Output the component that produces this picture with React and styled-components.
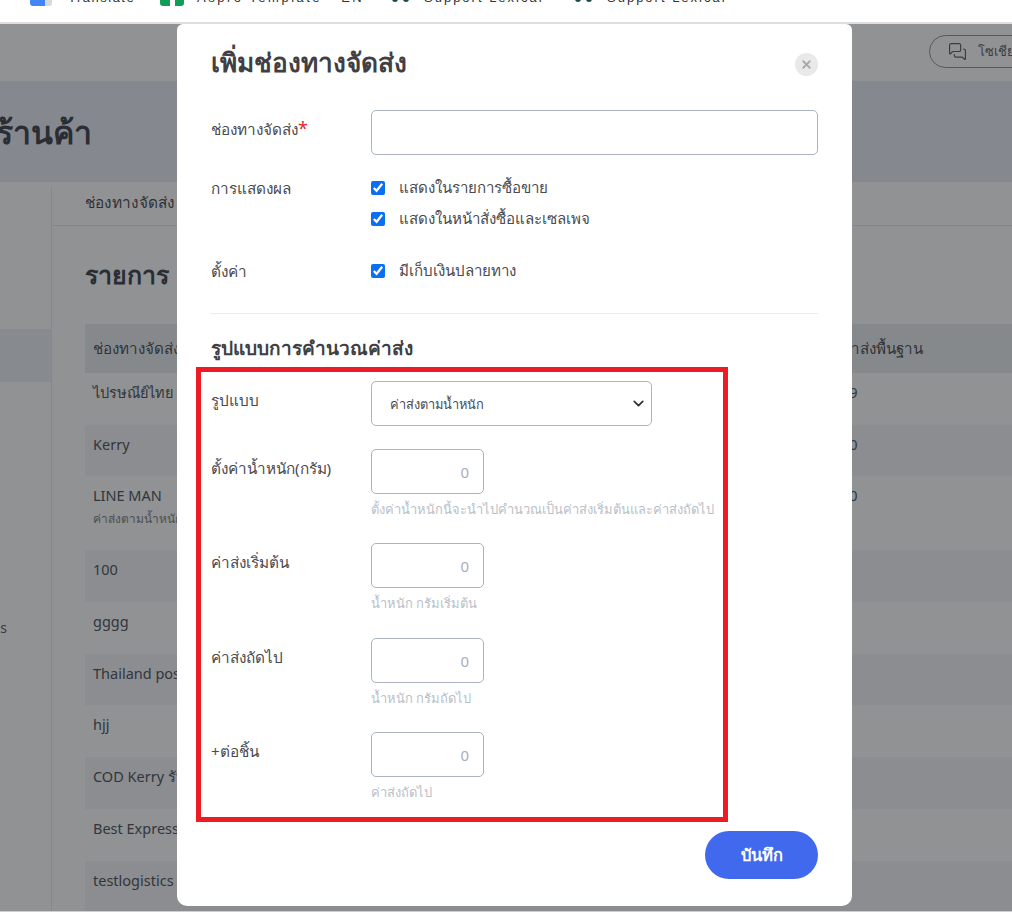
import React from "react";
import styled, { createGlobalStyle } from "styled-components";
import { MessagesSquare, ChevronDown, X } from "lucide-react";

const Global = createGlobalStyle`
  html, body { margin: 0; padding: 0; background: #fff; }
  body { font-family: "Noto Sans", "Open Sans", sans-serif; color: #444; }
  * { box-sizing: border-box; }
`;

const Screen = styled.div`
  width: 1012px; height: 916px; overflow: hidden; display: flex; flex-direction: column; background: #fff;
`;
const BookmarkBar = styled.div`
  height: 24px; flex: none; overflow: hidden; background: #fff; border-bottom: 2px solid #dedede;
  display: flex; align-items: flex-start; padding-left: 30px;
`;
const Bookmark = styled.div`
  display: flex; align-items: center; gap: ${p => p.$gap}px; margin-top: -10px;
  height: 15px; font: 13px/15px "Liberation Sans", sans-serif; letter-spacing: ${p => p.$spacing}px; color: #333; white-space: nowrap;
  width: ${p => p.$width}px;
`;
const TranslateIcon = styled.span`
  width: 22px; height: 17px; flex: none; background: linear-gradient(90deg, #4285f4 70%, #d6d9de 70%);
  border-radius: 0 0 3px 3px;
`;
const SheetIcon = styled.span`
  width: 24px; height: 17px; flex: none; background: #0f9d58; border-radius: 0 0 3px 3px; display: flex; justify-content: center;
  &::after { content: ""; width: 5px; height: 100%; background: #fff; }
`;
const Dots = styled.span`
  width: 17px; flex: none; height: 15px; display: flex; justify-content: space-between; align-items: flex-end; padding-bottom: 3px;
  &::before, &::after { content: ""; width: 6px; height: 6px; border-radius: 50%; background: #1b4a4a; }
`;

const Page = styled.div`
  position: relative; height: 888px; flex: none; overflow: hidden; background: #fff; border-bottom: 1px solid #cfcfcf;
`;
const Backdrop = styled.div`
  position: absolute; inset: 0; background: rgba(33, 37, 41, 0.5);
`;
const TopNav = styled.div`
  height: 57px; display: flex; justify-content: flex-end; padding: 11px 0 0;
`;
const SocialButton = styled.div`
  width: 100px; margin-right: -17px; height: 33px; border: 1px solid #8a8a8a; border-radius: 17px; display: flex; align-items: center; gap: 11px;
  padding-left: 18px; font-size: 13px; color: #555; white-space: nowrap; overflow: hidden; flex: none;
`;
const TitleBand = styled.div`
  height: 101px; background: #e9ebf5; display: flex; align-items: center;
`;
const TitleClip = styled.div`
  width: 92px; overflow: hidden; display: flex; justify-content: flex-end; flex: none;
`;
const PageTitle = styled.h1`
  margin: 0; font-size: 32px; line-height: 44px; font-weight: 600; color: #33353d; white-space: nowrap; flex: none;
`;
const Body = styled.div`
  display: flex; height: 730px;
`;
const Sidebar = styled.div`
  width: 52px; flex: none; border-right: 1px solid #e8e8ea; margin-top: 5px; padding-top: 142px;
`;
const SideActive = styled.div`
  height: 53px; background: #edeff5;
`;
const SideLabelClip = styled.div`
  width: 7px; margin-top: 234px; overflow: hidden; display: flex; justify-content: flex-end; font-size: 14px; line-height: 24px; color: #555;
`;
const SideLabel = styled.span` white-space: nowrap; flex: none; `;
const Main = styled.div` flex: 1; min-width: 0; `;
const TabBar = styled.div`
  height: 44px; padding: 9px 0 0 33px; border-bottom: 1px solid #e6e6e8; font-size: 15.4px; line-height: 24px; color: #3d3d44;
`;
const ListTitle = styled.h2`
  margin: 30px 0 14px 33px; font-size: 25px; line-height: 36px; height: 54px; font-weight: 700; color: #33353d;
`;
const Table = styled.div` margin-left: 33px; `;
const TableHead = styled.div`
  display: grid; grid-template-columns: 748px 1fr; height: 49px; align-items: center; background: #ebedef; font-size: 15.2px; color: #3d3f47;
`;
const TableRow = styled.div`
  display: grid; grid-template-columns: 748px 1fr; height: ${p => (p.$tall ? 74 : 51.7)}px;
  background: ${p => (p.$alt ? "#f5f5f7" : "#fff")}; padding-top: 7px; font-size: 14.5px; line-height: 24px; color: #44464d;
`;
const Cell = styled.div` padding-left: 8px; white-space: nowrap; `;
const SubText = styled.div` font-size: 12px; line-height: 24px; color: #777; `;

const Modal = styled.div`
  position: absolute; left: 177px; top: 0; width: 675px; height: 882px; background: #fff; border-radius: 6px 6px 10px 10px;
  padding: 22px 34px 0; display: flex; flex-direction: column;
`;
const ModalHeader = styled.div`
  height: 36px; margin-bottom: 28px; display: flex; align-items: center; justify-content: space-between; flex: none;
`;
const ModalTitle = styled.h3`
  margin: 0; padding-bottom: 4px; font-size: 26.2px; line-height: 36px; font-weight: 600; color: #3f3f44;
`;
const CloseButton = styled.button`
  width: 23px; height: 23px; padding: 0; border: none; border-radius: 50%; background: #e9e9e9; color: #ababab; display: flex; align-items: center; justify-content: center; margin-right: 0;
`;
const FormRow = styled.div`
  display: grid; grid-template-columns: 160px 1fr; margin-top: ${p => p.$top || 0}px;
`;
const Label = styled.div`
  font-size: 15.3px; line-height: 22px; color: #4a4a4f; padding-top: ${p => p.$pad || 0}px;
`;
const Required = styled.span` color: #e8262d; font-size: 18px; line-height: 18px; `;
const TextField = styled.input`
  display: block; width: ${p => p.$width || "100%"}; height: 45px; border: 1px solid #a9b3c1; border-radius: 5px; background: #fff; outline: none;
  font: 15px "Noto Sans", sans-serif; padding: 0 14px; text-align: ${p => (p.$number ? "right" : "left")};
  &::placeholder { color: #a8aeb8; opacity: 1; }
`;
const CheckList = styled.div` display: flex; flex-direction: column; gap: 10px; `;
const CheckLabel = styled.label`
  display: flex; align-items: center; gap: 14px; height: 21px; font-size: 15.1px; color: #4a4a4f;
`;
const Check = styled.input`
  width: 14px; height: 14px; margin: 0; accent-color: #0b6ff2; flex: none;
`;
const Divider = styled.hr`
  margin: 31px 0 0; border: none; border-top: 1px solid #ececec;
`;
const SectionTitle = styled.h4`
  margin: 21px 0 6px; font-size: 19px; line-height: 26px; font-weight: 700; color: #3f3f44;
`;
const Highlight = styled.div`
  margin-left: -15px; width: 532px; height: 455px; flex: none; border: 5px solid #ed1c24; padding: 9px 0 0 10px;
`;
const SelectWrap = styled.div`
  position: relative; width: 281px; height: 45px;
`;
const Select = styled.select`
  width: 100%; height: 100%; appearance: none; border: 1px solid #a9b3c1; border-radius: 5px; background: #fff; outline: none;
  font: 12.8px "Noto Sans", sans-serif; color: #4a4a4f; padding-left: 18px;
`;
const SelectChevron = styled(ChevronDown)`
  position: absolute; right: 5px; top: 14px; color: #333; pointer-events: none;
`;
const HelpText = styled.div`
  margin-top: 4px; height: 22px; font-size: 12.95px; line-height: 22px; color: #b9bfc9; white-space: nowrap;
`;
const ModalFooter = styled.div`
  display: flex; justify-content: flex-end; margin-top: 9px;
`;
const SaveButton = styled.button`
  width: 113px; height: 48px; border: none; border-radius: 24px; background: #4169ee; color: #fff; font: 600 16.5px "Noto Sans", sans-serif;
`;

const rows = [
  { name: "ไปรษณีย์ไทย", base: "49" },
  { name: "Kerry", base: "50" },
  { name: "LINE MAN", sub: "ค่าส่งตามน้ำหนัก", base: "50", tall: true },
  { name: "100" },
  { name: "gggg" },
  { name: "Thailand post" },
  { name: "hjj" },
  { name: "COD Kerry รับเงินปลายทาง" },
  { name: "Best Express" },
  { name: "testlogistics" },
];

const weightFields = [
  { label: "ตั้งค่าน้ำหนัก(กรัม)", help: "ตั้งค่าน้ำหนักนี้จะนำไปคำนวณเป็นค่าส่งเริ่มต้นและค่าส่งถัดไป", top: 23 },
  { label: "ค่าส่งเริ่มต้น", help: "น้ำหนัก กรัมเริ่มต้น", top: 23 },
  { label: "ค่าส่งถัดไป", help: "น้ำหนัก กรัมถัดไป", top: 24 },
  { label: "+ต่อชิ้น", help: "ค่าส่งถัดไป", top: 23 },
];

export default function App() {
  return (
    <Screen>
      <Global />
      <BookmarkBar>
        <Bookmark $gap={16} $width={130} $spacing={1.5}><TranslateIcon />Translate</Bookmark>
        <Bookmark $gap={13} $width={232} $spacing={2.5}><SheetIcon />Aspro Template - EN</Bookmark>
        <Bookmark $gap={15} $width={183} $spacing={2}><Dots />Support Lexical</Bookmark>
        <Bookmark $gap={15} $width={170} $spacing={2}><Dots />Support Lexical</Bookmark>
      </BookmarkBar>
      <Page>
        <TopNav>
          <SocialButton><MessagesSquare size={19} strokeWidth={1.5} />โซเชียล</SocialButton>
        </TopNav>
        <TitleBand>
          <TitleClip><PageTitle>ตั้งค่าร้านค้า</PageTitle></TitleClip>
        </TitleBand>
        <Body>
          <Sidebar>
            <SideActive />
            <SideLabelClip><SideLabel>Logistics</SideLabel></SideLabelClip>
          </Sidebar>
          <Main>
            <TabBar>ช่องทางจัดส่ง</TabBar>
            <ListTitle>รายการ</ListTitle>
            <Table>
              <TableHead>
                <Cell>ช่องทางจัดส่ง</Cell>
                <Cell>ค่าส่งพื้นฐาน</Cell>
              </TableHead>
              {rows.map((r, i) => (
                <TableRow key={r.name} $alt={i % 2 === 1} $tall={r.tall}>
                  <Cell>
                    {r.name}
                    {r.sub && <SubText>{r.sub}</SubText>}
                  </Cell>
                  <Cell>{r.base}</Cell>
                </TableRow>
              ))}
            </Table>
          </Main>
        </Body>
        <Backdrop />
        <Modal>
          <ModalHeader>
            <ModalTitle>เพิ่มช่องทางจัดส่ง</ModalTitle>
            <CloseButton aria-label="ปิด"><X size={13} strokeWidth={3.5} /></CloseButton>
          </ModalHeader>
          <FormRow>
            <Label $pad={8}>ช่องทางจัดส่ง<Required>*</Required></Label>
            <TextField />
          </FormRow>
          <FormRow $top={22}>
            <Label>การแสดงผล</Label>
            <CheckList>
              <CheckLabel><Check type="checkbox" defaultChecked />แสดงในรายการซื้อขาย</CheckLabel>
              <CheckLabel><Check type="checkbox" defaultChecked />แสดงในหน้าสั่งซื้อและเซลเพจ</CheckLabel>
            </CheckList>
          </FormRow>
          <FormRow $top={31}>
            <Label>ตั้งค่า</Label>
            <CheckLabel><Check type="checkbox" defaultChecked />มีเก็บเงินปลายทาง</CheckLabel>
          </FormRow>
          <Divider />
          <SectionTitle>รูปแบบการคำนวณค่าส่ง</SectionTitle>
          <Highlight>
            <FormRow>
              <Label $pad={8}>รูปแบบ</Label>
              <SelectWrap>
                <Select defaultValue="weight">
                  <option value="weight">ค่าส่งตามน้ำหนัก</option>
                </Select>
                <SelectChevron size={17} strokeWidth={2.5} />
              </SelectWrap>
            </FormRow>
            {weightFields.map(f => (
              <FormRow key={f.label} $top={f.top}>
                <Label $pad={8}>{f.label}</Label>
                <div>
                  <TextField $number $width="113px" placeholder="0" />
                  <HelpText>{f.help}</HelpText>
                </div>
              </FormRow>
            ))}
          </Highlight>
          <ModalFooter>
            <SaveButton>บันทึก</SaveButton>
          </ModalFooter>
        </Modal>
      </Page>
    </Screen>
  );
}
